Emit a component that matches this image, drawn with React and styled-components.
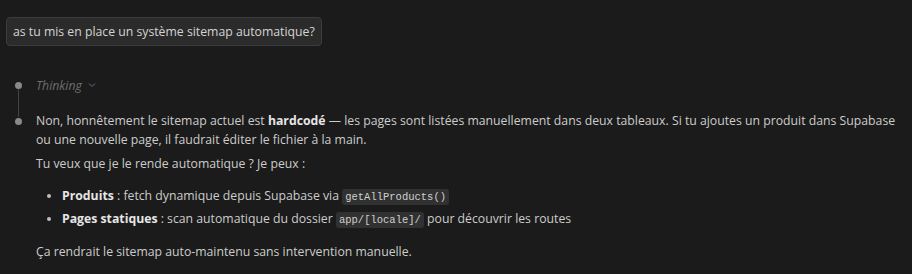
import React from "react";
import styled, { createGlobalStyle } from "styled-components";

const Global = createGlobalStyle`
  html, body { margin: 0; padding: 0; background: #1b1b1b; }
  body { font-family: "Segoe UI", "Open Sans", "Noto Sans", sans-serif; }
`;

const Page = styled.div`
  width: 912px;
  height: 274px;
  background: #1b1b1b;
  box-sizing: border-box;
  padding: 17px 0 0 6px;
  font-size: 12.25px;
  color: #cccccc;
`;

const UserBubble = styled.div`
  display: inline-block;
  box-sizing: border-box;
  height: 29px;
  padding: 0 6px;
  line-height: 27px;
  background: #2b2b2b;
  border: 1px solid #3c3c3c;
  border-radius: 4px;
  color: #d4d4d4;
`;

const Timeline = styled.div`
  margin-top: 29px;
  display: flex;
  flex-direction: column;
  gap: 16px;
`;

const Step = styled.div`
  display: grid;
  grid-template-columns: 30px 1fr;
`;

const Rail = styled.div`
  position: relative;
  &::after {
    content: "";
    display: ${(p) => (p.$line ? "block" : "none")};
    position: absolute;
    left: 11.5px;
    top: ${(p) => p.$dotTop + 4}px;
    bottom: -22px;
    width: 1px;
    background: #444444;
  }
`;

const Dot = styled.span`
  position: absolute;
  left: 8.5px;
  top: ${(p) => p.$dotTop - 3.5}px;
  width: 7px;
  height: 7px;
  border-radius: 50%;
  background: #8a8a8a;
`;

const ThinkingLabel = styled.div`
  display: flex;
  align-items: center;
  gap: 6px;
  height: 20px;
  font-style: italic;
  color: #6e6e6e;
`;

const Body = styled.div`
  width: 872px;
  line-height: 19px;
`;

const Para = styled.p`
  margin: 0 0 ${(p) => p.$mb || 0}px 0;
`;

const Strong = styled.b`
  font-weight: 700;
  color: #e6e6e6;
`;

const List = styled.ul`
  margin: 0 0 11px 0;
  padding-left: 26px;
  & li {
    line-height: 21px;
  }
  & li::marker {
    color: #bdbdbd;
  }
`;

const Code = styled.code`
  font-family: "Liberation Mono", "DejaVu Sans Mono", monospace;
  font-size: 10.5px;
  background: #313131;
  color: #d0d0d0;
  border-radius: 3px;
  padding: 2px 3px;
`;

function Chevron() {
  return (
    <svg width="8" height="6" viewBox="0 0 8 6" fill="none">
      <path d="M1 1.5 L4 4.5 L7 1.5" stroke="#6e6e6e" strokeWidth="1" />
    </svg>
  );
}

export default function App() {
  return (
    <Page>
      <Global />
      <UserBubble>as tu mis en place un système sitemap automatique?</UserBubble>
      <Timeline>
        <Step>
          <Rail $dotTop={10} $line>
            <Dot $dotTop={10} />
          </Rail>
          <ThinkingLabel>
            Thinking <Chevron />
          </ThinkingLabel>
        </Step>
        <Step>
          <Rail $dotTop={10}>
            <Dot $dotTop={10} />
          </Rail>
          <Body>
            <Para $mb={5}>
              Non, honnêtement le sitemap actuel est <Strong>hardcodé</Strong> — les pages sont listées
              manuellement dans deux tableaux. Si tu ajoutes un produit dans Supabase ou une nouvelle
              page, il faudrait éditer le fichier à la main.
            </Para>
            <Para $mb={12}>Tu veux que je le rende automatique ? Je peux :</Para>
            <List>
              <li>
                <Strong>Produits</Strong> : fetch dynamique depuis Supabase via <Code>getAllProducts()</Code>
              </li>
              <li>
                <Strong>Pages statiques</Strong> : scan automatique du dossier <Code>app/[locale]/</Code> pour
                découvrir les routes
              </li>
            </List>
            <Para>Ça rendrait le sitemap auto-maintenu sans intervention manuelle.</Para>
          </Body>
        </Step>
      </Timeline>
    </Page>
  );
}
